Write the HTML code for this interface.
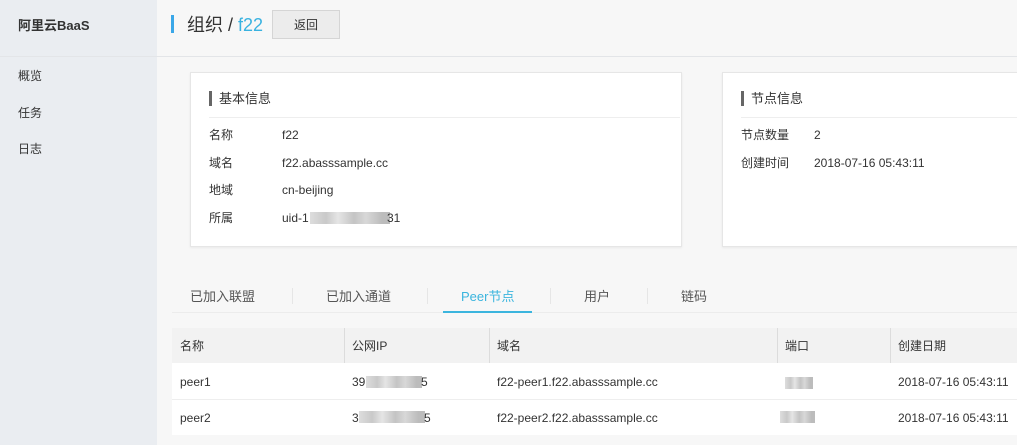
<!DOCTYPE html>
<html><head><meta charset="utf-8"><style>
*{margin:0;padding:0;box-sizing:border-box}
body{width:1017px;height:445px;overflow:hidden;background:#f7f7f7;font-family:"Liberation Sans","Noto Sans CJK SC",sans-serif;color:#333;position:relative;font-size:12px;line-height:16px}
.abs{position:absolute;line-height:16px;white-space:nowrap}
.t{transform:translateY(1px)}
.side{left:0;top:0;width:157px;height:445px;background:#eaedf1}
.hline{left:0;top:56px;width:1017px;height:1px;background:#e3e5e8}
.card{background:#fff;border:1px solid #e6e6e6;box-shadow:0 1px 2px rgba(0,0,0,.06)}
.ttl{font-size:13px;color:#333}
.bar{width:3px;height:15px;background:#666}
.blur{background:linear-gradient(90deg,#ddd,#c9c9c9 20%,#e5e5e5 35%,#c4c4c4 55%,#d8d8d8 70%,#bcbcbc 90%);height:12px}
.tab{font-size:13px;color:#555}
.sep{width:1px;height:16px;background:#e6e6e6;top:288px}
</style></head><body>
<div class="abs side"></div>
<div class="abs hline"></div>
<div class="abs" style="left:18px;top:18px;font-size:13px;font-weight:bold;color:#333">阿里云BaaS</div>
<div class="abs" style="left:18px;top:68px">概览</div>
<div class="abs" style="left:18px;top:105px">任务</div>
<div class="abs" style="left:18px;top:141px">日志</div>
<div class="abs" style="left:171px;top:15px;width:3px;height:18px;background:#3aa7e8"></div>
<div class="abs" style="left:187px;top:14px;font-size:18px;line-height:22px;color:#333">组织 / <span style="color:#39b2e0">f22</span></div>
<div class="abs" style="left:272px;top:10px;width:68px;height:29px;background:#ececec;border:1px solid #d5d5d5;text-align:center;line-height:29px">返回</div>

<div class="abs card" style="left:190px;top:72px;width:492px;height:175px"></div>
<div class="abs bar" style="left:209px;top:91px"></div>
<div class="abs ttl" style="left:219px;top:91px">基本信息</div>
<div class="abs" style="left:209px;top:117px;width:471px;height:1px;background:#eee"></div>
<div class="abs" style="left:209px;top:127px">名称</div><div class="abs" style="left:282px;top:127px">f22</div>
<div class="abs" style="left:209px;top:155px">域名</div><div class="abs" style="left:282px;top:155px">f22.abasssample.cc</div>
<div class="abs" style="left:209px;top:182px">地域</div><div class="abs" style="left:282px;top:182px">cn-beijing</div>
<div class="abs" style="left:209px;top:210px">所属</div><div class="abs" style="left:282px;top:210px">uid-1</div>
<div class="abs blur" style="left:310px;top:212px;width:80px"></div><div class="abs" style="left:387px;top:210px">31</div>

<div class="abs card" style="left:722px;top:72px;width:300px;height:175px"></div>
<div class="abs bar" style="left:741px;top:91px"></div>
<div class="abs ttl" style="left:751px;top:91px">节点信息</div>
<div class="abs" style="left:741px;top:117px;width:280px;height:1px;background:#eee"></div>
<div class="abs" style="left:741px;top:127px">节点数量</div><div class="abs" style="left:814px;top:127px">2</div>
<div class="abs" style="left:741px;top:155px">创建时间</div><div class="abs" style="left:814px;top:155px">2018-07-16 05:43:11</div>

<div class="abs tab" style="left:190px;top:289px">已加入联盟</div>
<div class="abs sep" style="left:292px"></div>
<div class="abs tab" style="left:326px;top:289px">已加入通道</div>
<div class="abs sep" style="left:427px"></div>
<div class="abs tab" style="left:461px;top:289px;color:#3bb5de">Peer节点</div>
<div class="abs sep" style="left:550px"></div>
<div class="abs tab" style="left:584px;top:289px">用户</div>
<div class="abs sep" style="left:647px"></div>
<div class="abs tab" style="left:681px;top:289px">链码</div>
<div class="abs" style="left:172px;top:312px;width:845px;height:1px;background:#ececec"></div>
<div class="abs" style="left:443px;top:311px;width:89px;height:2px;background:#3bb5de"></div>

<div class="abs" style="left:172px;top:328px;width:845px;height:107px;background:#fff"></div>
<div class="abs" style="left:172px;top:328px;width:845px;height:35px;background:#f2f2f2"></div>
<div class="abs" style="left:344px;top:328px;width:1px;height:35px;background:#dcdcdc"></div>
<div class="abs" style="left:489px;top:328px;width:1px;height:35px;background:#dcdcdc"></div>
<div class="abs" style="left:777px;top:328px;width:1px;height:35px;background:#dcdcdc"></div>
<div class="abs" style="left:890px;top:328px;width:1px;height:35px;background:#dcdcdc"></div>
<div class="abs" style="left:172px;top:399px;width:845px;height:1px;background:#eee"></div>
<div class="abs" style="left:180px;top:338px">名称</div>
<div class="abs" style="left:352px;top:338px">公网IP</div>
<div class="abs" style="left:497px;top:338px">域名</div>
<div class="abs" style="left:785px;top:338px">端口</div>
<div class="abs" style="left:898px;top:338px">创建日期</div>
<div class="abs" style="left:180px;top:374px">peer1</div>
<div class="abs" style="left:352px;top:374px">39</div><div class="abs blur" style="left:366px;top:376px;width:56px"></div><div class="abs" style="left:421px;top:374px">5</div>
<div class="abs" style="left:497px;top:374px">f22-peer1.f22.abasssample.cc</div>
<div class="abs blur" style="left:785px;top:377px;width:28px"></div>
<div class="abs" style="left:898px;top:374px">2018-07-16 05:43:11</div>
<div class="abs" style="left:180px;top:410px">peer2</div>
<div class="abs" style="left:352px;top:410px">3</div><div class="abs blur" style="left:359px;top:411px;width:66px"></div><div class="abs" style="left:424px;top:410px">5</div>
<div class="abs" style="left:497px;top:410px">f22-peer2.f22.abasssample.cc</div>
<div class="abs blur" style="left:780px;top:411px;width:35px"></div>
<div class="abs" style="left:898px;top:410px">2018-07-16 05:43:11</div>
</body></html>
